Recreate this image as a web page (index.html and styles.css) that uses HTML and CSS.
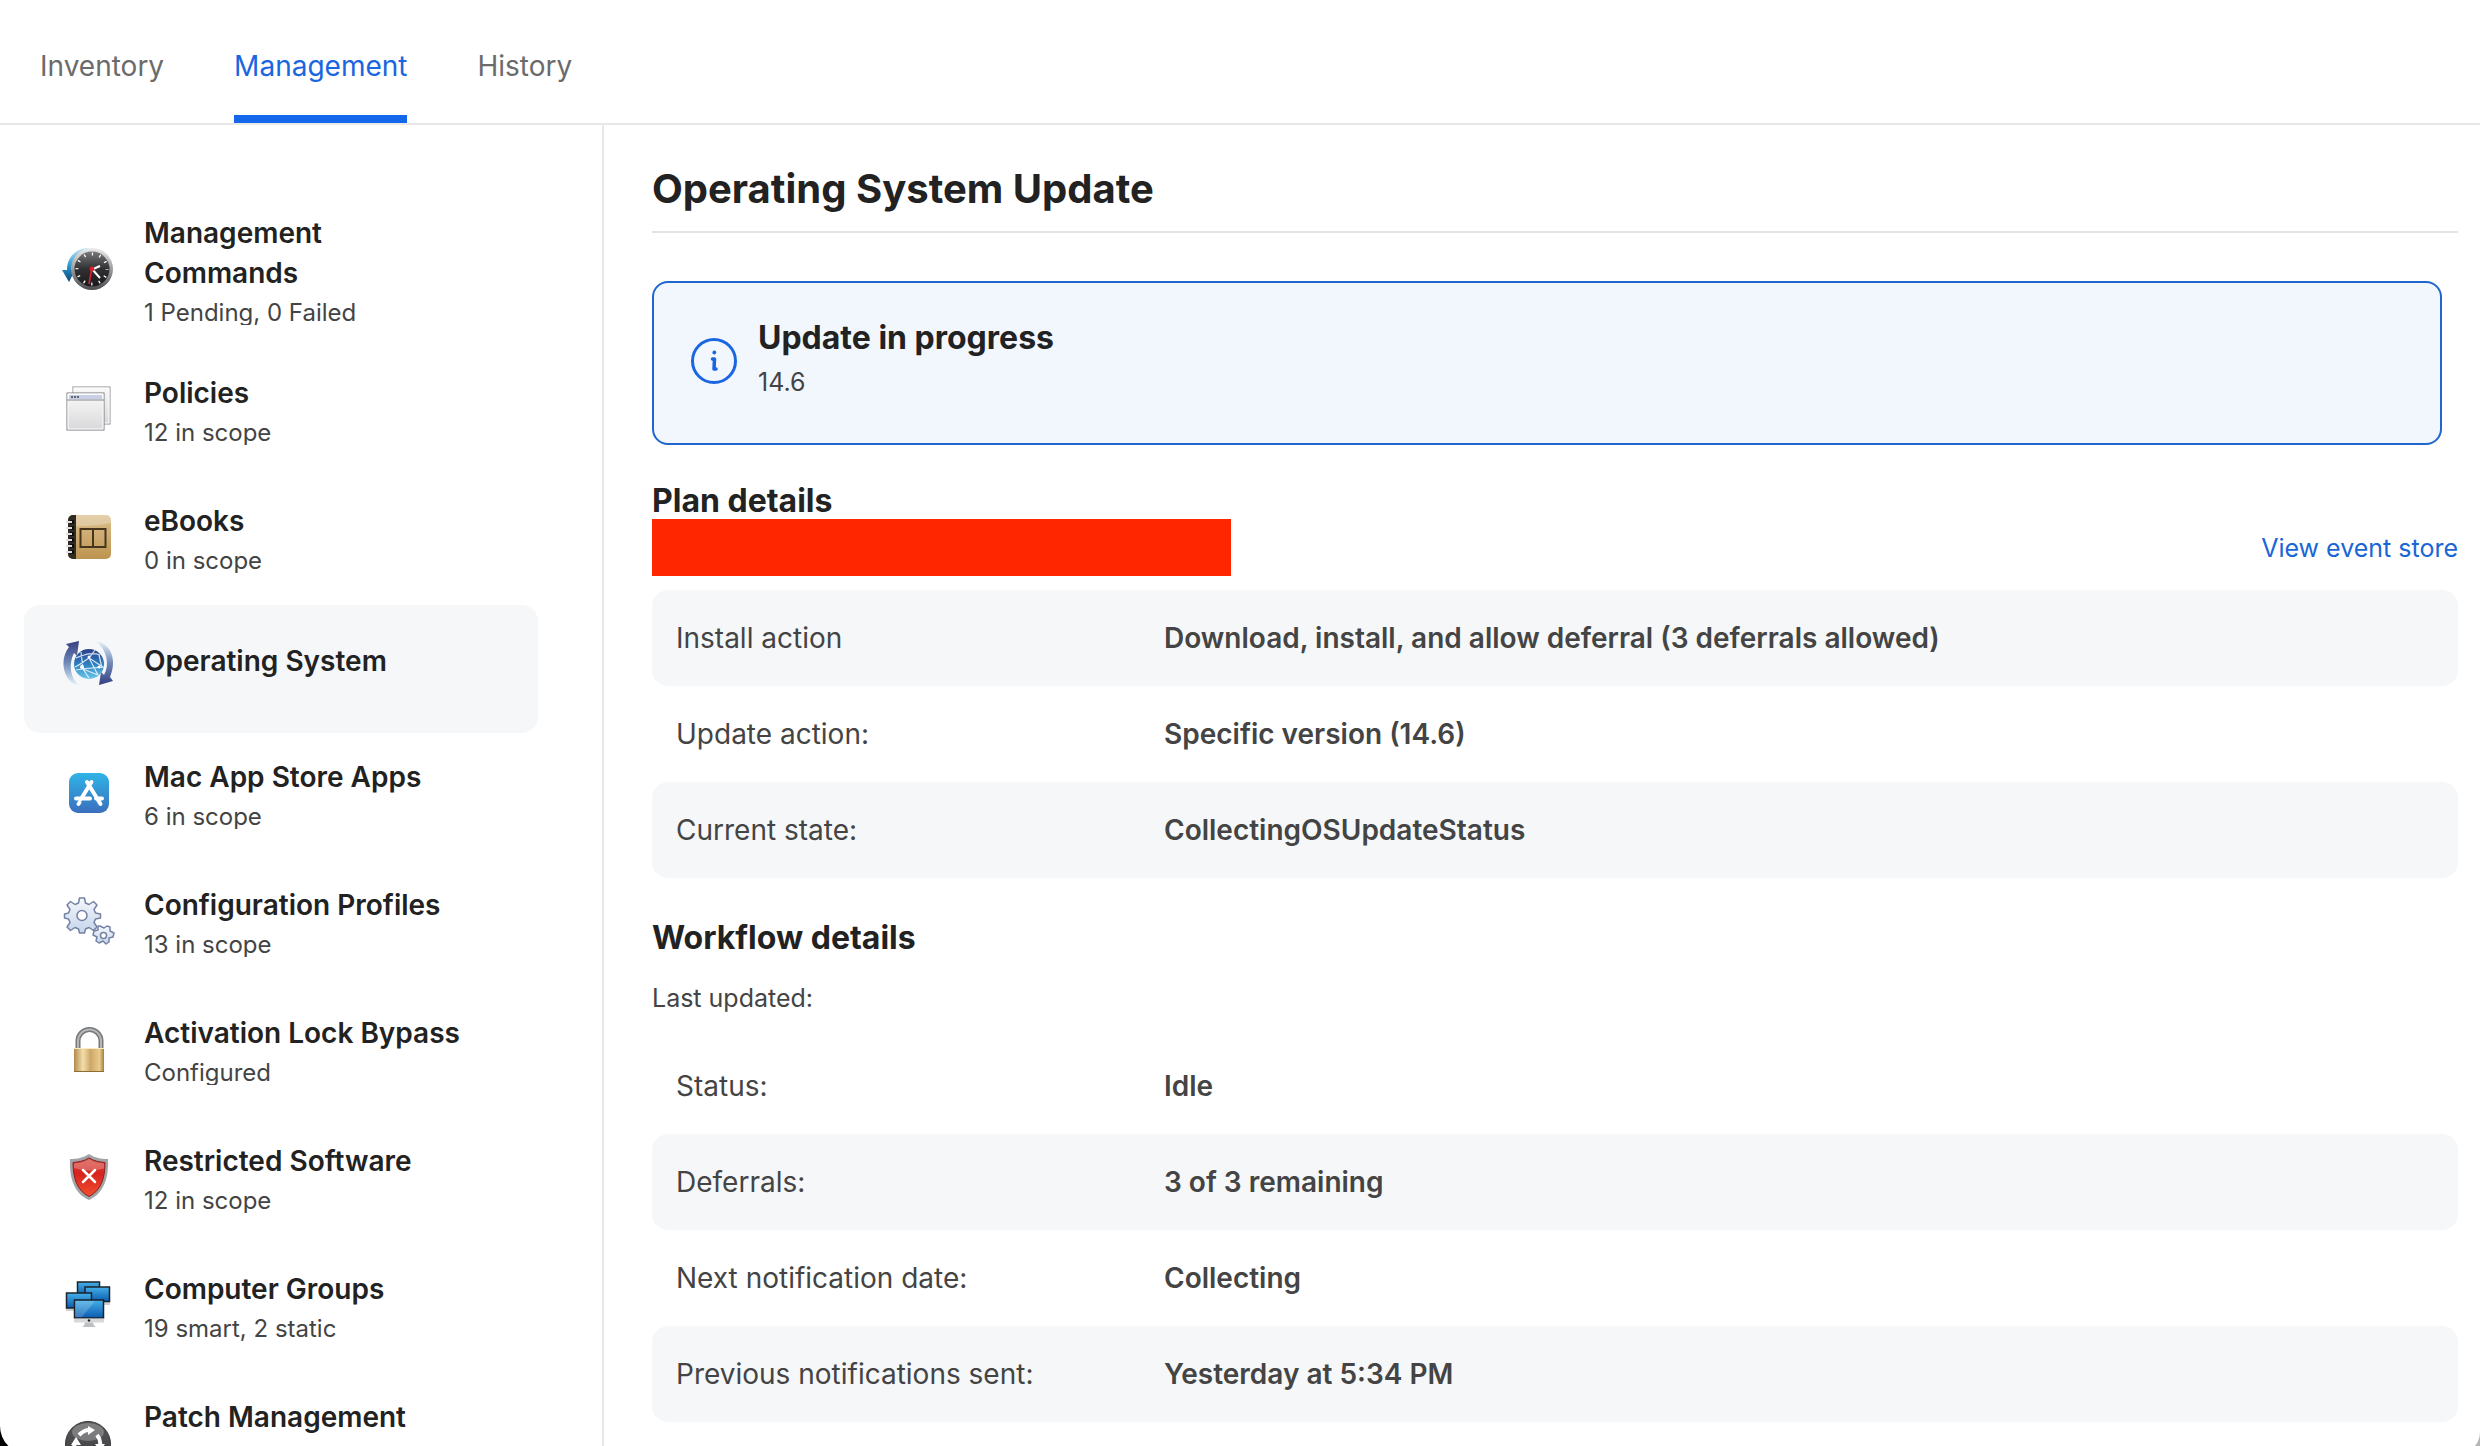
FILE: index.html
```html
<!DOCTYPE html>
<html lang="en">
<head>
  <meta charset="UTF-8">
  <title>Operating System Update</title>
  <link rel="stylesheet" href="styles.css">
</head>
<body>
  <div class="window">
    <nav class="tabs">
      <a class="tab" href="#inventory">Inventory</a>
      <a class="tab active" href="#management">Management</a>
      <a class="tab" href="#history">History</a>
    </nav>
    <div class="layout">
      <aside class="sidebar">
        <a class="item" href="#commands">
          <span class="row">
            <svg class="icon" viewBox="0 0 56 56">
              <defs>
                <linearGradient id="rim" x2="0" y2="1"><stop offset="0" stop-color="#ececec"/><stop offset="1" stop-color="#4c4c4e"/></linearGradient>
                <linearGradient id="dial" x2="0" y2="1"><stop offset="0" stop-color="#77787a"/><stop offset=".5" stop-color="#303032"/><stop offset="1" stop-color="#19191b"/></linearGradient>
                <linearGradient id="back" x2="0" y2="1"><stop offset="0" stop-color="#c4e8f6"/><stop offset=".5" stop-color="#2f9bd0"/><stop offset="1" stop-color="#07467e"/></linearGradient>
              </defs>
              <path d="M24 7C12 9 5 17 5 29H0l7 12 6-12h-4C10 20 16 12 30 8z" fill="url(#back)"/>
              <circle cx="30" cy="28" r="21" fill="url(#rim)"/>
              <circle cx="30" cy="28" r="17.5" fill="url(#dial)"/>
              <circle cx="30" cy="28" r="15" fill="none" stroke="#fff" stroke-width="3" stroke-dasharray="1.3 6.554" stroke-dashoffset=".65"/>
              <path d="M29 29l9-4M30 28l8 9" stroke="#fff" stroke-width="2"/>
              <path d="M30 26l-3 17" stroke="#e0202c" stroke-width="1.6"/>
              <circle cx="30" cy="28" r="2.4" fill="#e0202c"/>
            </svg>
            <span class="text">
              <span class="name">Management Commands</span>
              <span class="note">1 Pending, 0 Failed</span>
            </span>
          </span>
        </a>
        <a class="item" href="#policies">
          <span class="row">
            <svg class="icon" viewBox="0 0 56 56">
              <defs><linearGradient id="sheet" x2="0" y2="1"><stop offset="0" stop-color="#fafafa"/><stop offset="1" stop-color="#d8d8da"/></linearGradient></defs>
              <rect x="11" y="6" width="37" height="37" fill="url(#sheet)" stroke="#8b8c92"/>
              <rect x="12" y="7" width="35" height="35" fill="none" stroke="#fff"/>
              <rect x="5" y="12" width="37" height="37" fill="url(#sheet)" stroke="#77787e"/>
              <rect x="6" y="13" width="35" height="35" fill="none" stroke="#fff"/>
              <path d="M7 14h33v4H7z" fill="#c7d0e6"/>
              <path d="M5 19h37" stroke="#85868c"/>
              <path d="M9 16h8" stroke="#5f6678" stroke-width="2" stroke-dasharray="2 1"/>
            </svg>
            <span class="text">
              <span class="name">Policies</span>
              <span class="note">12 in scope</span>
            </span>
          </span>
        </a>
        <a class="item" href="#ebooks">
          <span class="row">
            <svg class="icon" viewBox="0 0 56 56">
              <defs><linearGradient id="cover" x2="0" y2="1"><stop offset="0" stop-color="#dcc08e"/><stop offset="1" stop-color="#bd9450"/></linearGradient></defs>
              <rect x="6" y="6" width="43" height="44" rx="5" fill="url(#cover)"/>
              <path d="M14 6h-3a5 5 0 0 0-5 5v34a5 5 0 0 0 5 5h3z" fill="#302b24"/>
              <path d="M14 6h30a5 5 0 0 1 5 5v3Q32 18 14 17z" fill="#fff" opacity=".25"/>
              <path d="M8 13h4M8 19h4M8 25h4M8 31h4M8 37h4M8 43h4" stroke="#0f0d0b" stroke-width="4"/>
              <path d="M4 13h6M4 19h6M4 25h6M4 31h6M4 37h6M4 43h6" stroke="#dedede" stroke-width="2"/>
              <path d="M18.500 20h25v18h-25zM31 20v19" fill="none" stroke="#46341c" stroke-width="2"/>
            </svg>
            <span class="text">
              <span class="name">eBooks</span>
              <span class="note">0 in scope</span>
            </span>
          </span>
        </a>
        <a class="item selected" href="#os">
          <span class="row">
            <svg class="icon" viewBox="0 0 56 56">
              <defs>
                <linearGradient id="globe" x2="0" y2="1"><stop offset="0" stop-color="#2d3f86"/><stop offset=".5" stop-color="#2b7fc0"/><stop offset="1" stop-color="#6cc8ee"/></linearGradient>
                <linearGradient id="up" x2="0" y2="1"><stop offset="0" stop-color="#363f82"/><stop offset=".5" stop-color="#7089b8"/><stop offset="1" stop-color="#e6f5fb"/></linearGradient>
                <linearGradient id="down" x2="0" y2="1"><stop offset="0" stop-color="#e6f5fb"/><stop offset=".5" stop-color="#7089b8"/><stop offset="1" stop-color="#363f82"/></linearGradient>
              </defs>
              <path d="M17 4L4 7l3 3C0 19 0 31 5 40c3 5 7 8 12 8C9 42 6 28 12 16l3 3z" fill="url(#up)"/>
              <path d="M37 48l2-13 3 3c6-10 3-25-8-34 16 3 21 20 14 36l3 4z" fill="url(#down)"/>
              <circle cx="27" cy="27" r="15" fill="url(#globe)"/>
              <path d="M14 21c10-4 16-6 24-3M13 30c5-2 8-5 14-9l6-8M27 21l14 9-22 2M27 21l9 17M19 15l2 17 6 9M14 33l7-1 15 6M37 18l3 13" fill="none" stroke="#fff" stroke-width="1.200" opacity=".8"/>
              <circle cx="20" cy="30" r="2" fill="#fff"/><circle cx="27" cy="20" r="1.500" fill="#fff"/><circle cx="37" cy="30" r="1.500" fill="#fff"/>
            </svg>
            <span class="text">
              <span class="name">Operating System</span>
              <span class="note"></span>
            </span>
          </span>
        </a>
        <a class="item" href="#apps">
          <span class="row">
            <svg class="icon" viewBox="0 0 56 56">
              <defs><linearGradient id="store" x2="0" y2="1"><stop offset="0" stop-color="#2fb4e6"/><stop offset="1" stop-color="#3a6fbd"/></linearGradient></defs>
              <rect x="7" y="8" width="40" height="40" rx="9" fill="url(#store)"/>
              <path d="M25 17l13.500 22M29.500 17L19 34M17.500 37.500l-1 1.500M14 33.500h14M34 33.500h6" fill="none" stroke="#fff" stroke-width="4" stroke-linecap="round"/>
            </svg>
            <span class="text">
              <span class="name">Mac App Store Apps</span>
              <span class="note">6 in scope</span>
            </span>
          </span>
        </a>
        <a class="item" href="#profiles">
          <span class="row">
            <svg class="icon" viewBox="0 0 56 56">
              <defs><linearGradient id="gear" x2="0" y2="1"><stop offset="0" stop-color="#f6f8fc"/><stop offset="1" stop-color="#c5d4ea"/></linearGradient></defs>
              <g fill="url(#gear)" stroke="#7482a4" stroke-width="1.500" stroke-linejoin="round">
                <path d="M17.500 5h5l1 5 3.500 1.500 4.500-3L35 12l-3 4.500 1.500 3.500 5 1v4l-5 1-1.500 3.500 3 4.500-3.500 3.500-4.500-3-3.500 1.500-1 4h-5l-1-4-3.500-1.500-4.500 3L5 34l3-4.500L6.500 26l-4-1v-4l4-1L8 16.500 5 12l3.500-3.500 4.500 3 3.500-1.500z"/>
                <circle cx="20" cy="22.500" r="5" fill="#fff"/>
                <path d="M38 33l4 2 3-2 3 1v4l4 2-1 4-4 1v4l-3 2-3-3-4 2-3-2 1-4-4-2 1-4 4-1 0-4z"/>
                <circle cx="41.500" cy="42.500" r="3" fill="#fff"/>
              </g>
            </svg>
            <span class="text">
              <span class="name">Configuration Profiles</span>
              <span class="note">13 in scope</span>
            </span>
          </span>
        </a>
        <a class="item" href="#lock">
          <span class="row">
            <svg class="icon" viewBox="0 0 56 56">
              <defs>
                <linearGradient id="brass"><stop offset="0" stop-color="#b18a4c"/><stop offset=".3" stop-color="#f3dfac"/><stop offset=".55" stop-color="#cda767"/><stop offset=".85" stop-color="#e8cb8c"/><stop offset="1" stop-color="#a67d42"/></linearGradient>
              </defs>
              <path d="M16 28V20a11 11 0 0 1 23 0v8" fill="none" stroke="#77797b" stroke-width="5"/>
              <path d="M16 28V20a11 11 0 0 1 23 0v8" fill="none" stroke="#b4b6b8" stroke-width="2"/>
              <rect x="12" y="27" width="30" height="24" fill="url(#brass)"/>
              <path d="M12 27.500h30" stroke="#fbecc2"/>
              <path d="M12 50.500h30" stroke="#8f6c38"/>
            </svg>
            <span class="text">
              <span class="name">Activation Lock Bypass</span>
              <span class="note">Configured</span>
            </span>
          </span>
        </a>
        <a class="item" href="#restricted">
          <span class="row">
            <svg class="icon" viewBox="0 0 56 56">
              <defs><linearGradient id="red" x2="0" y2="1"><stop offset="0" stop-color="#cf4a3c"/><stop offset=".4" stop-color="#d8221f"/><stop offset="1" stop-color="#f0502d"/></linearGradient></defs>
              <path d="M27 5c6 4 12 5 19 5 1 20-5 35-19 41C13 45 7 30 8 10c7 0 13-1 19-5z" fill="#a3a4a8"/>
              <path d="M27 9c5 3 10 4 16 4.500 0 16-4 28-16 34-12-6-16-18-16-34C17 13 22 12 27 9z" fill="url(#red)" stroke="#8b2020"/>
              <path d="M27 10c5 3 10 4 15 4.500v5Q27 24 12 19v-4.500c6-.5 10-1.500 15-4.500z" fill="#fff" opacity=".25"/>
              <path d="M21 21l12 12M33 21L21 33" stroke="#fff" stroke-width="2.500" stroke-linecap="round"/>
            </svg>
            <span class="text">
              <span class="name">Restricted Software</span>
              <span class="note">12 in scope</span>
            </span>
          </span>
        </a>
        <a class="item" href="#groups">
          <span class="row">
            <svg class="icon" viewBox="0 0 56 56">
              <defs><linearGradient id="screen" x2="0" y2="1"><stop offset="0" stop-color="#45b0e8"/><stop offset="1" stop-color="#0b5bb0"/></linearGradient></defs>
              <path d="M34 24h14v4H34zM4 30h10v4H4z" fill="#cfd0d2"/>
              <g fill="url(#screen)" stroke="#1b2229" stroke-width="1.500">
                <rect x="15.500" y="5" width="22" height="14"/>
                <rect x="23" y="10" width="24.500" height="14.500"/>
                <rect x="4.500" y="16" width="25" height="15"/>
                <rect x="12.500" y="23" width="29" height="18"/>
              </g>
              <path d="M13 24h20L20 40h-7z" fill="#fff" opacity=".18"/>
              <path d="M12 41.500h30v4H12z" fill="#d7d8da"/>
              <path d="M23 45.500h8l1 3 2 1.500H20l2-1.500z" fill="#bfc0c3"/>
              <circle cx="27" cy="43.500" r="1.200" fill="#222"/>
            </svg>
            <span class="text">
              <span class="name">Computer Groups</span>
              <span class="note">19 smart, 2 static</span>
            </span>
          </span>
        </a>
        <a class="item" href="#patch">
          <span class="row">
            <svg class="icon" viewBox="0 -12 56 56">
              <defs><linearGradient id="disc" x2="0" y2="1"><stop offset="0" stop-color="#58585a"/><stop offset="1" stop-color="#3c3c3e"/></linearGradient></defs>
              <circle cx="26" cy="27" r="22.500" fill="url(#disc)" stroke="#39393b"/>
              <ellipse cx="26" cy="15" rx="16" ry="9" fill="#fff" opacity=".25"/>
              <path d="M17 18q5-5 10-5M35 18q4 5 3 10M34 38q-6 4-12 2M14 36q-3-5-1-10" fill="none" stroke="#fff" stroke-width="4"/>
              <path d="M26 9l7 4-7 5zM33 27h10l-5 7zM23 35v10l-7-5zM9 28l5-8 5 8z" fill="#fff"/>
            </svg>
            <span class="text">
              <span class="name">Patch Management</span>
              <span class="note">&nbsp;</span>
            </span>
          </span>
        </a>
      </aside>
      <main class="main">
        <h1>Operating System Update</h1>
        <div class="notice">
          <svg class="info" viewBox="0 0 48 48" fill="none" stroke="#1a66e0" stroke-linecap="round" stroke-linejoin="round">
            <circle cx="24" cy="24" r="21.500" stroke-width="3"/>
            <path d="M22.500 22h2l-.5 10h2" stroke-width="3.500"/>
            <circle cx="24.300" cy="15.500" r="1.900" fill="#1a66e0" stroke="none"/>
          </svg>
          <div>
            <h2>Update in progress</h2>
            <p class="small version">14.6</p>
          </div>
        </div>
        <section>
          <h2>Plan details</h2>
          <div class="plan-bar">
            <div class="redacted"></div>
            <a class="link" href="#events">View event store</a>
          </div>
          <table class="details plan">
            <tr><th scope="row">Install action</th><td>Download, install, and allow deferral (3 deferrals allowed)</td></tr>
            <tr><th scope="row">Update action:</th><td>Specific version (14.6)</td></tr>
            <tr><th scope="row">Current state:</th><td>CollectingOSUpdateStatus</td></tr>
          </table>
        </section>
        <section class="workflow">
          <h2>Workflow details</h2>
          <p class="small updated">Last updated:</p>
          <table class="details flow">
            <tr><th scope="row">Status:</th><td>Idle</td></tr>
            <tr><th scope="row">Deferrals:</th><td>3 of 3 remaining</td></tr>
            <tr><th scope="row">Next notification date:</th><td>Collecting</td></tr>
            <tr><th scope="row">Previous notifications sent:</th><td>Yesterday at 5:34 PM</td></tr>
          </table>
        </section>
      </main>
    </div>
  </div>
</body>
</html>
```

FILE: styles.css
```css
* { box-sizing: border-box; }
body { height: 100vh; margin: 0; overflow: hidden; background: linear-gradient(90deg, #000 50%, #b5b5b5 50%); color: #444; font-family: Inter, sans-serif; font-size: 28px; line-height: 40px; }
h1, h2, p { margin: 0; color: #222; }
a { text-decoration: none; }
/* the rounded bottom runs a little past the visible edge */
.window { display: flex; flex-direction: column; height: calc(100vh + 8px); overflow: hidden; background: #fff; border-radius: 0 0 22px 28px; }

.tabs { display: flex; flex-shrink: 0; gap: 70px; padding: 0 40px; border-bottom: 2px solid #e8e8e8; }
.tab { padding: 46px 0 29px; border-bottom: 8px solid transparent; color: #6b6b6b; }
.tab.active { border-color: #1467ea; color: #1a66e0; }

.layout { display: flex; flex: 1; min-height: 0; }
.sidebar { flex: 0 0 604px; padding: 64px 64px 0 24px; border-right: 2px solid #e8e8e8; overflow: hidden; }
.item { display: block; min-height: 128px; padding: 24px 38px; border-radius: 16px; color: #222; }
.item.selected { background: #f5f7f9; }
.row { display: flex; align-items: center; gap: 26px; min-height: 72px; }
.icon { flex: none; width: 56px; height: 56px; }
.text { max-width: 320px; }
.name, .note { display: block; }
.name { font-weight: 600; }
.item:first-child .name { max-width: 240px; }
.note { margin-top: 8px; overflow: hidden; color: #444; font-size: 24px; line-height: 24px; }

.main { flex: 1; padding: 36px 22px 0 48px; overflow: hidden; }
h1 { padding-bottom: 14px; border-bottom: 2px solid #e3e3e3; font-size: 40px; line-height: 56px; font-weight: 700; }
h2 { font-size: 32px; line-height: 36px; font-weight: 700; }
.small { color: #444; font-size: 25px; line-height: 40px; }
.notice { display: flex; align-items: center; gap: 20px; margin: 48px 16px 38px 0; padding: 34px 36px 38px; height: 164px; border: 2px solid #2066cf; border-radius: 16px; background: #f2f7fe; }
.version { margin-top: 6px; }
.info { flex: none; width: 48px; height: 48px; }
.plan-bar { display: flex; align-items: center; justify-content: space-between; margin-bottom: 14px; }
.redacted { width: 579px; height: 57px; background: #ff2600; }
.link { color: #1a66d6; font-size: 25px; }
.details { width: 100%; border-collapse: collapse; }
.details th, .details td { height: 96px; padding: 0 24px; text-align: left; }
.details th { width: 488px; border-radius: 16px 0 0 16px; font-weight: 400; }
.details td { border-radius: 0 16px 16px 0; font-weight: 600; }
.plan tr:nth-child(odd) > *, .flow tr:nth-child(even) > * { background: #f5f7f9; }
.workflow { padding-top: 42px; }
.updated { margin: 22px 0 20px; }
```
